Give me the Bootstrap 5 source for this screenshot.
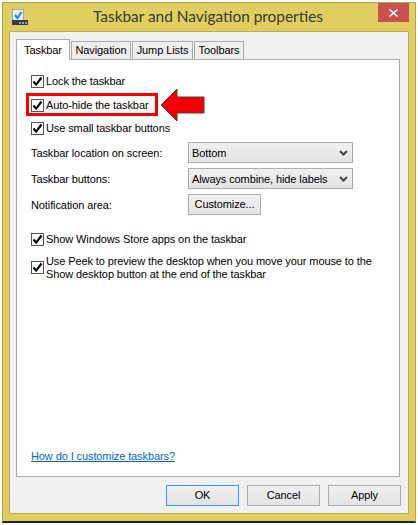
<!DOCTYPE html>
<html lang="en">
<head>
  <meta charset="UTF-8" />
  <meta name="viewport" content="width=device-width, initial-scale=1" />
  <title>Taskbar and Navigation properties</title>
  <link href="https://cdn.jsdelivr.net/npm/bootstrap@5.3.2/dist/css/bootstrap.min.css" rel="stylesheet" />
  <script src="https://cdn.jsdelivr.net/npm/bootstrap@5.3.2/dist/js/bootstrap.bundle.min.js"></script>
  <style>
    body {
      font-family: "Liberation Sans", Arial, sans-serif;
      font-size: 11px;
      line-height: 13px;
      letter-spacing: -0.1px;
      background: #fff;
      color: #000;
      margin: 0;
      white-space: nowrap;
    }
    .win-frame {
      width: 414px;
      height: 521px;
      margin: 2px 0 0 2px;
      background: #e0ce60;
      border: 1px solid #b3a44a;
      border-bottom: 2px solid #222;
      padding: 0 6px;
      position: relative;
    }
    .win-title {
      height: 28px;
      font-family: Lato, sans-serif;
      font-size: 15.4px;
      letter-spacing: 0;
      color: #3a3a2c;
    }
    .win-icon { margin: 0 0 0 3px; }
    .win-name { padding: 0 0 2px 10px; }
    .win-close {
      width: 31px;
      height: 19px;
      background: #c75050;
      align-self: flex-start;
    }
    .win-client {
      height: 483px;
      background: #f0f0f0;
      border: 1px solid #bfae50;
      padding: 7px 7px 0 6px;
    }
    .win-tabs { height: 20px; border: 0; align-items: flex-end; gap: 1px; }
    .win-tab {
      height: 18px;
      padding: 0;
      background: #eee;
      border: 1px solid #acacac;
      border-bottom: 0;
      color: #000;
    }
    .win-tab.on {
      height: 21px;
      margin-bottom: -1px;
      background: #fff;
      position: relative;
      z-index: 1;
    }
    .tab-w1 { width: 54px; }
    .tab-w2 { width: 60px; }
    .tab-w3 { width: 61px; }
    .tab-w4 { width: 50px; }
    .tab-page {
      height: 418px;
      margin-right: 1px;
      background: #fff;
      border: 1px solid #acacac;
      padding: 15px 14px 0;
      position: relative;
    }
    .chk-row { height: 13px; gap: 2px; margin-bottom: 11px; }
    .chk-row.last-chk { margin-bottom: 7px; }
    .chk-box[type=checkbox] {
      width: 13px;
      height: 13px;
      margin: 0;
      border: 1px solid #555;
      border-radius: 0;
      flex: none;
      background-color: #fff;
    }
    .chk-box[type=checkbox]:checked {
      background-color: #fff;
      border-color: #555;
      background-size: 11px;
      background-image: url("data:image/svg+xml,%3Csvg xmlns='http://www.w3.org/2000/svg' viewBox='0 0 11 11'%3E%3Cpath d='M1.500 5.500 4.200 8.600 9.500 1.500' fill='none' stroke='%23000' stroke-width='2.200'/%3E%3C/svg%3E");
    }
    .hilite {
      width: 132px;
      height: 23px;
      margin: -6px 0 6px -5px;
      padding: 1px 0 0 2px;
      border: 3px solid #f00;
    }
    .hilite .chk-row { margin: 0; }
    .hi-arrow { position: absolute; left: 143px; top: 28px; }
    .set-row { width: 322px; height: 21px; margin-bottom: 5px; }
    .set-row > span:first-child { width: 157px; flex: none; padding-top: 1px; }
    .win-drop {
      width: 165px;
      height: 21px;
      padding: 1px 4px 0 3px;
      background: linear-gradient(#f0f0f0, #e3e3e3);
      border: 1px solid #acacac;
      color: #000;
    }
    .win-btn {
      height: 21px;
      padding: 0;
      background: linear-gradient(#f0f0f0, #e3e3e3);
      border: 1px solid #acacac;
      border-radius: 0;
      color: #000;
      font-size: inherit;
      line-height: 13px;
      letter-spacing: inherit;
    }
    .btn-custom { width: 73px; }
    .help-link {
      position: absolute;
      left: 14px;
      top: 390px;
      color: #0066cc;
    }
    .foot-row { gap: 8px; padding-top: 8px; }
    .foot-row .win-btn { width: 73px; }
    .foot-row .win-btn.def { border-color: #3399ff; }
    .first-gap { margin-top: 18px; }
    .peek-row { height: 26px; margin-top: -2px; }
    .peek-row .chk-box[type=checkbox] { margin-top: 6px; }
  </style>
</head>
<body>
  <div class="win-frame">
    <div class="win-title d-flex align-items-center">
      <svg class="win-icon" width="16" height="16" viewBox="0 0 16 16">
        <rect x="0.500" y="0.500" width="11" height="11" fill="#e8eef6" stroke="#9aa" />
        <path d="M3 6 5.500 9 9.500 3" fill="none" stroke="#1f8be0" stroke-width="2" />
        <rect y="11" width="16" height="5" fill="#2c3d55" />
        <rect x="7" y="13" width="2" height="2" fill="#8fa0b8" />
        <rect x="10" y="13" width="2" height="2" fill="#8fa0b8" />
        <rect x="13" y="13" width="2" height="2" fill="#8fa0b8" />
      </svg>
      <div class="win-name flex-grow-1 text-center">Taskbar and Navigation properties</div>
      <div class="win-close d-flex align-items-center justify-content-center">
        <svg width="9" height="8" viewBox="0 0 9 8"><path d="M1 0 4.500 3 8 0 9 1 5.700 4 9 7 8 8 4.500 5 1 8 0 7 3.300 4 0 1Z" fill="#fff" /></svg>
      </div>
    </div>

    <div class="win-client">
      <ul class="nav win-tabs">
        <li class="nav-item"><a class="nav-link win-tab on tab-w1 d-flex align-items-center justify-content-center" href="#">Taskbar</a></li>
        <li class="nav-item"><a class="nav-link win-tab tab-w2 d-flex align-items-center justify-content-center" href="#">Navigation</a></li>
        <li class="nav-item"><a class="nav-link win-tab tab-w3 d-flex align-items-center justify-content-center" href="#">Jump Lists</a></li>
        <li class="nav-item"><a class="nav-link win-tab tab-w4 d-flex align-items-center justify-content-center" href="#">Toolbars</a></li>
      </ul>

      <div class="tab-page">
        <label class="chk-row d-flex align-items-center">
          <input class="form-check-input chk-box" type="checkbox" checked /> Lock the taskbar
        </label>
        <div class="hilite d-flex align-items-center">
          <label class="chk-row d-flex align-items-center">
            <input class="form-check-input chk-box" type="checkbox" checked /> Auto-hide the taskbar
          </label>
        </div>
        <label class="chk-row last-chk d-flex align-items-center">
          <input class="form-check-input chk-box" type="checkbox" checked /> Use small taskbar buttons
        </label>

        <svg class="hi-arrow" width="45" height="34" viewBox="0 0 45 34">
          <path d="M1 17 17 1V9H44V25H17V33Z" fill="#f00000" stroke="#444" />
        </svg>

        <div class="set-row d-flex align-items-center">
          <span>Taskbar location on screen:</span>
          <div class="win-drop d-flex align-items-center justify-content-between">
            <span>Bottom</span>
            <svg width="9" height="6" viewBox="0 0 9 6"><path d="M1 1 4.500 4.500 8 1" fill="none" stroke="#444" stroke-width="2" /></svg>
          </div>
        </div>
        <div class="set-row d-flex align-items-center">
          <span>Taskbar buttons:</span>
          <div class="win-drop d-flex align-items-center justify-content-between">
            <span>Always combine, hide labels</span>
            <svg width="9" height="6" viewBox="0 0 9 6"><path d="M1 1 4.500 4.500 8 1" fill="none" stroke="#444" stroke-width="2" /></svg>
          </div>
        </div>
        <div class="set-row d-flex align-items-center">
          <span>Notification area:</span>
          <button class="btn win-btn btn-custom" type="button">Customize...</button>
        </div>

        <label class="chk-row d-flex align-items-center first-gap">
          <input class="form-check-input chk-box" type="checkbox" checked /> Show Windows Store apps on the taskbar
        </label>
        <label class="chk-row peek-row d-flex align-items-start">
          <input class="form-check-input chk-box" type="checkbox" checked />
          <span>Use Peek to preview the desktop when you move your mouse to the<br />Show desktop button at the end of the taskbar</span>
        </label>

        <a class="help-link" href="#">How do I customize taskbars?</a>
      </div>

      <div class="foot-row d-flex justify-content-end">
        <button class="btn win-btn def" type="button">OK</button>
        <button class="btn win-btn" type="button">Cancel</button>
        <button class="btn win-btn" type="button">Apply</button>
      </div>
    </div>
  </div>
</body>
</html>
